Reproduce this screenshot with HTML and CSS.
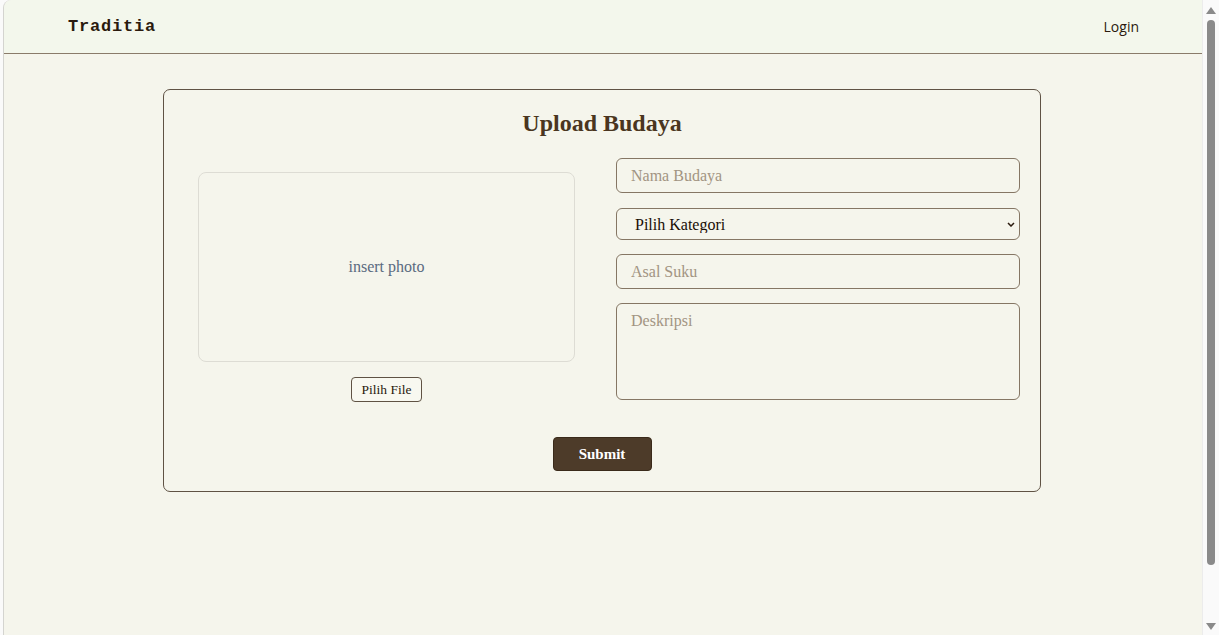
FILE: index.html
```html
<!DOCTYPE html>
<html lang="id">
<head>
<meta charset="utf-8">
<title>Traditia - Upload Budaya</title>
<link rel="stylesheet" href="styles.css">
</head>
<body>
<header class="topbar">
  <div class="logo">Traditia</div>
  <a class="login" href="#">Login</a>
</header>
<main class="main">
  <section class="card">
    <h1 class="title">Upload Budaya</h1>
    <div class="form-grid">
      <div class="photo-col">
        <div class="photo-box">insert photo</div>
        <button class="file-btn" type="button">Pilih File</button>
      </div>
      <div class="fields">
        <input class="field field-input" type="text" placeholder="Nama Budaya">
        <div class="select-wrap">
          <select class="field field-select">
            <option>Pilih Kategori</option>
          </select>
          <svg class="chev" width="8" height="5" viewBox="0 0 8 5"><path d="M1 1 L4 4 L7 1" fill="none" stroke="#2a1a0e" stroke-width="1.5"/></svg>
        </div>
        <input class="field field-input" type="text" placeholder="Asal Suku">
        <textarea class="field field-area" placeholder="Deskripsi"></textarea>
      </div>
    </div>
    <div class="actions">
      <button class="submit-btn" type="button">Submit</button>
    </div>
  </section>
</main>
<div class="scrollbar" aria-hidden="true">
  <svg class="sb-arrow" width="10" height="8" viewBox="0 0 10 8"><path d="M0 8 L5 1 L10 8 Z" fill="#8a8a8a"/></svg>
  <div class="sb-thumb"></div>
  <svg class="sb-arrow" width="10" height="8" viewBox="0 0 10 8"><path d="M0 0 L10 0 L5 7 Z" fill="#8a8a8a"/></svg>
</div>
</body>
</html>
```
FILE: styles.css
```css
html {
  background: #fafafa;
}
body {
  margin: 0 17px 0 3px;
  border-left: 1px solid #d4d4d0;
  border-top-left-radius: 8px;
  background: #f5f5ec;
  font-family: "Liberation Serif", Georgia, serif;
  color: #3a2a1a;
  height: 635px;
  overflow: hidden;
}
.topbar {
  height: 53px;
  background: #f3f7ec;
  border-bottom: 1px solid #8a7b6a;
  border-top-left-radius: 8px;
  display: flex;
  align-items: center;
  justify-content: space-between;
  padding: 0 63px 0 64px;
}
.logo {
  font-family: "Liberation Mono", "Courier New", monospace;
  font-weight: bold;
  font-size: 17px;
  color: #2a1a0e;
  letter-spacing: 0.8px;
}
.login {
  font-family: "Open Sans", "Segoe UI", sans-serif;
  font-size: 14px;
  color: #2a1a0e;
  text-decoration: none;
  margin-top: -1px;
}
.main {
  padding-top: 35px;
  display: flex;
  justify-content: center;
}
.card {
  box-sizing: border-box;
  width: 878px;
  border: 1px solid #5f5244;
  border-radius: 7px;
  padding: 20px 20px 20px 34px;
  margin-left: -2px;
}
.title {
  margin: 0 0 21px 0;
  text-align: center;
  font-size: 24px;
  font-weight: bold;
  color: #4a3520;
  padding-right: 14px;
}
.form-grid {
  display: flex;
  gap: 41px;
}
.photo-col {
  width: 377px;
  display: flex;
  flex-direction: column;
  align-items: center;
  padding-top: 14px;
}
.photo-box {
  width: 377px;
  height: 190px;
  box-sizing: border-box;
  border: 1px solid #dddcd4;
  border-radius: 8px;
  display: flex;
  align-items: center;
  justify-content: center;
  font-size: 16px;
  color: #5a6a80;
}
.file-btn {
  margin-top: 15px;
  font-family: "Liberation Serif", Georgia, serif;
  font-size: 13.5px;
  color: #2a1a0e;
  background: #f8f8f0;
  border: 1px solid #5f5244;
  border-radius: 4px;
  height: 25px;
  padding: 0 10px;
}
.fields {
  width: 404px;
  display: flex;
  flex-direction: column;
  gap: 14px;
}
.field {
  box-sizing: border-box;
  width: 404px;
  border: 1px solid #857664;
  border-radius: 6px;
  background: #f5f5ec;
  font-family: "Liberation Serif", Georgia, serif;
  font-size: 16px;
  color: #1a0e05;
  outline: none;
}
.field::placeholder {
  color: #a29482;
}
.field-input {
  height: 35px;
  padding: 0 14px;
}
.select-wrap {
  position: relative;
  margin-top: 1px;
}
.field-select {
  display: block;
  height: 32px;
  padding: 0 18px;
  appearance: none;
  -webkit-appearance: none;
}
.chev {
  position: absolute;
  right: 5px;
  top: 14px;
  pointer-events: none;
}
.field-area {
  display: block;
  height: 97px;
  padding: 8px 14px;
  resize: none;
}
.actions {
  display: flex;
  justify-content: center;
  margin-top: 35px;
  padding-right: 14px;
}
.submit-btn {
  width: 99px;
  height: 34px;
  background: #4d3b29;
  color: #fff;
  border: 1px solid #3a2a1a;
  border-radius: 4px;
  font-family: "Liberation Serif", Georgia, serif;
  font-size: 15px;
  font-weight: bold;
}
.scrollbar {
  position: fixed;
  top: 0;
  right: 0;
  width: 17px;
  height: 635px;
  background: #fafafa;
  border-left: 1px solid #ececec;
  box-sizing: border-box;
  display: flex;
  flex-direction: column;
  align-items: center;
  padding: 6px 0 4px;
}
.sb-thumb {
  flex: 1;
  width: 8px;
  background: #8a8a8a;
  border-radius: 4px;
  margin: 6px 0 58px;
}
```
